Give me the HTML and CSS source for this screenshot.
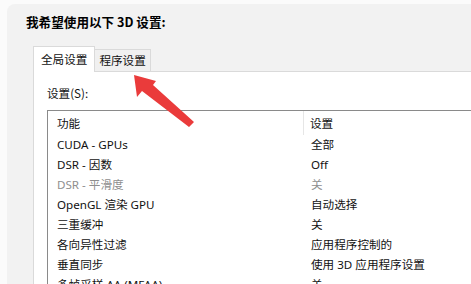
FILE: index.html
```html
<!DOCTYPE html>
<html lang="zh-CN">
<head>
<meta charset="utf-8">
<link rel="stylesheet" href="styles.css">
</head>
<body>
<div class="window">
  <div class="title">我希望使用以下 3D 设置:</div>
  <div class="tabs">
    <div class="tab active">全局设置</div>
    <div class="tab">程序设置</div>
  </div>
  <div class="panel">
    <div class="label">设置(S):</div>
    <div class="list">
      <div class="row head"><span class="c1">功能</span><span class="c2 sep">设置</span></div>
      <div class="row"><span class="c1">CUDA - GPUs</span><span class="c2">全部</span></div>
      <div class="row"><span class="c1">DSR - 因数</span><span class="c2">Off</span></div>
      <div class="row dim"><span class="c1">DSR - 平滑度</span><span class="c2">关</span></div>
      <div class="row"><span class="c1">OpenGL 渲染 GPU</span><span class="c2">自动选择</span></div>
      <div class="row"><span class="c1">三重缓冲</span><span class="c2">关</span></div>
      <div class="row"><span class="c1">各向异性过滤</span><span class="c2">应用程序控制的</span></div>
      <div class="row"><span class="c1">垂直同步</span><span class="c2">使用 3D 应用程序设置</span></div>
      <div class="row"><span class="c1">多帧采样 AA (MFAA)</span><span class="c2">关</span></div>
    </div>
  </div>
</div>
<svg class="arrow" width="471" height="284" viewBox="0 0 471 284">
  <path d="M189 127 L194 122 L153 85 L156 81 L134 75 L137 97 L142 91 Z" fill="#ea3b3b"/>
</svg>
</body>
</html>
```
FILE: styles.css
```css
html, body {
  margin: 0;
  padding: 0;
  width: 471px;
  height: 284px;
  overflow: hidden;
  background: #fbfbfb;
  font-family: "Noto Sans", "Noto Sans CJK SC", sans-serif;
  font-size: 11.6px;
  color: #111;
}
.window {
  margin: 4px 0 0 7px;
  height: 280px;
  background: #f2f2f2;
  border-radius: 8px 0 0 0;
  display: flex;
  flex-direction: column;
  overflow: hidden;
}
.title {
  font-family: "Noto Sans CJK SC", sans-serif;
  font-weight: bold;
  font-size: 12.6px;
  padding: 9px 0 0 19px;
  height: 20px;
  line-height: 18px;
  color: #000;
}
.tabs {
  display: flex;
  align-items: flex-end;
  margin-left: 26px;
  margin-top: 15px;
  height: 25px;
}
.tab {
  font-family: "Noto Sans CJK SC", sans-serif;
  height: 21px;
  line-height: 20px;
  padding: 0 4px;
  border: 1px solid #dadada;
  border-bottom: none;
  border-left: none;
  background: #f0f0f0;
  color: #111;
}
.tab.active {
  height: 25px;
  line-height: 24px;
  padding: 0 7px;
  background: #fff;
  border-left: 1px solid #dadada;
  margin-bottom: -1px;
  position: relative;
}
.panel {
  flex: 1;
  margin-left: 26px;
  background: #fff;
  border-top: 1px solid #dadada;
  border-left: 1px solid #dadada;
  padding: 13px 0 0 13px;
}
.label {
  font-family: "Noto Sans CJK SC", sans-serif;
  height: 25px;
  line-height: 16px;
}
.list {
  border-top: 1px solid #8a8a8a;
  border-left: 1px solid #8a8a8a;
  height: 200px;
  font-family: "Noto Sans", "Noto Sans CJK SC", sans-serif;
}
.row {
  display: flex;
  height: 20px;
  line-height: 20px;
}
.row.head {
  height: 24px;
  line-height: 26px;
}
.c1 {
  width: 246px;
  padding-left: 9px;
  white-space: nowrap;
}
.c2 {
  padding-left: 8px;
  white-space: nowrap;
}
.c2.sep {
  border-left: 1px solid #e6e6e6;
  padding-left: 6px;
}
.dim {
  color: #8e8e8e;
}
.arrow {
  position: absolute;
  left: 0;
  top: 0;
}
```
